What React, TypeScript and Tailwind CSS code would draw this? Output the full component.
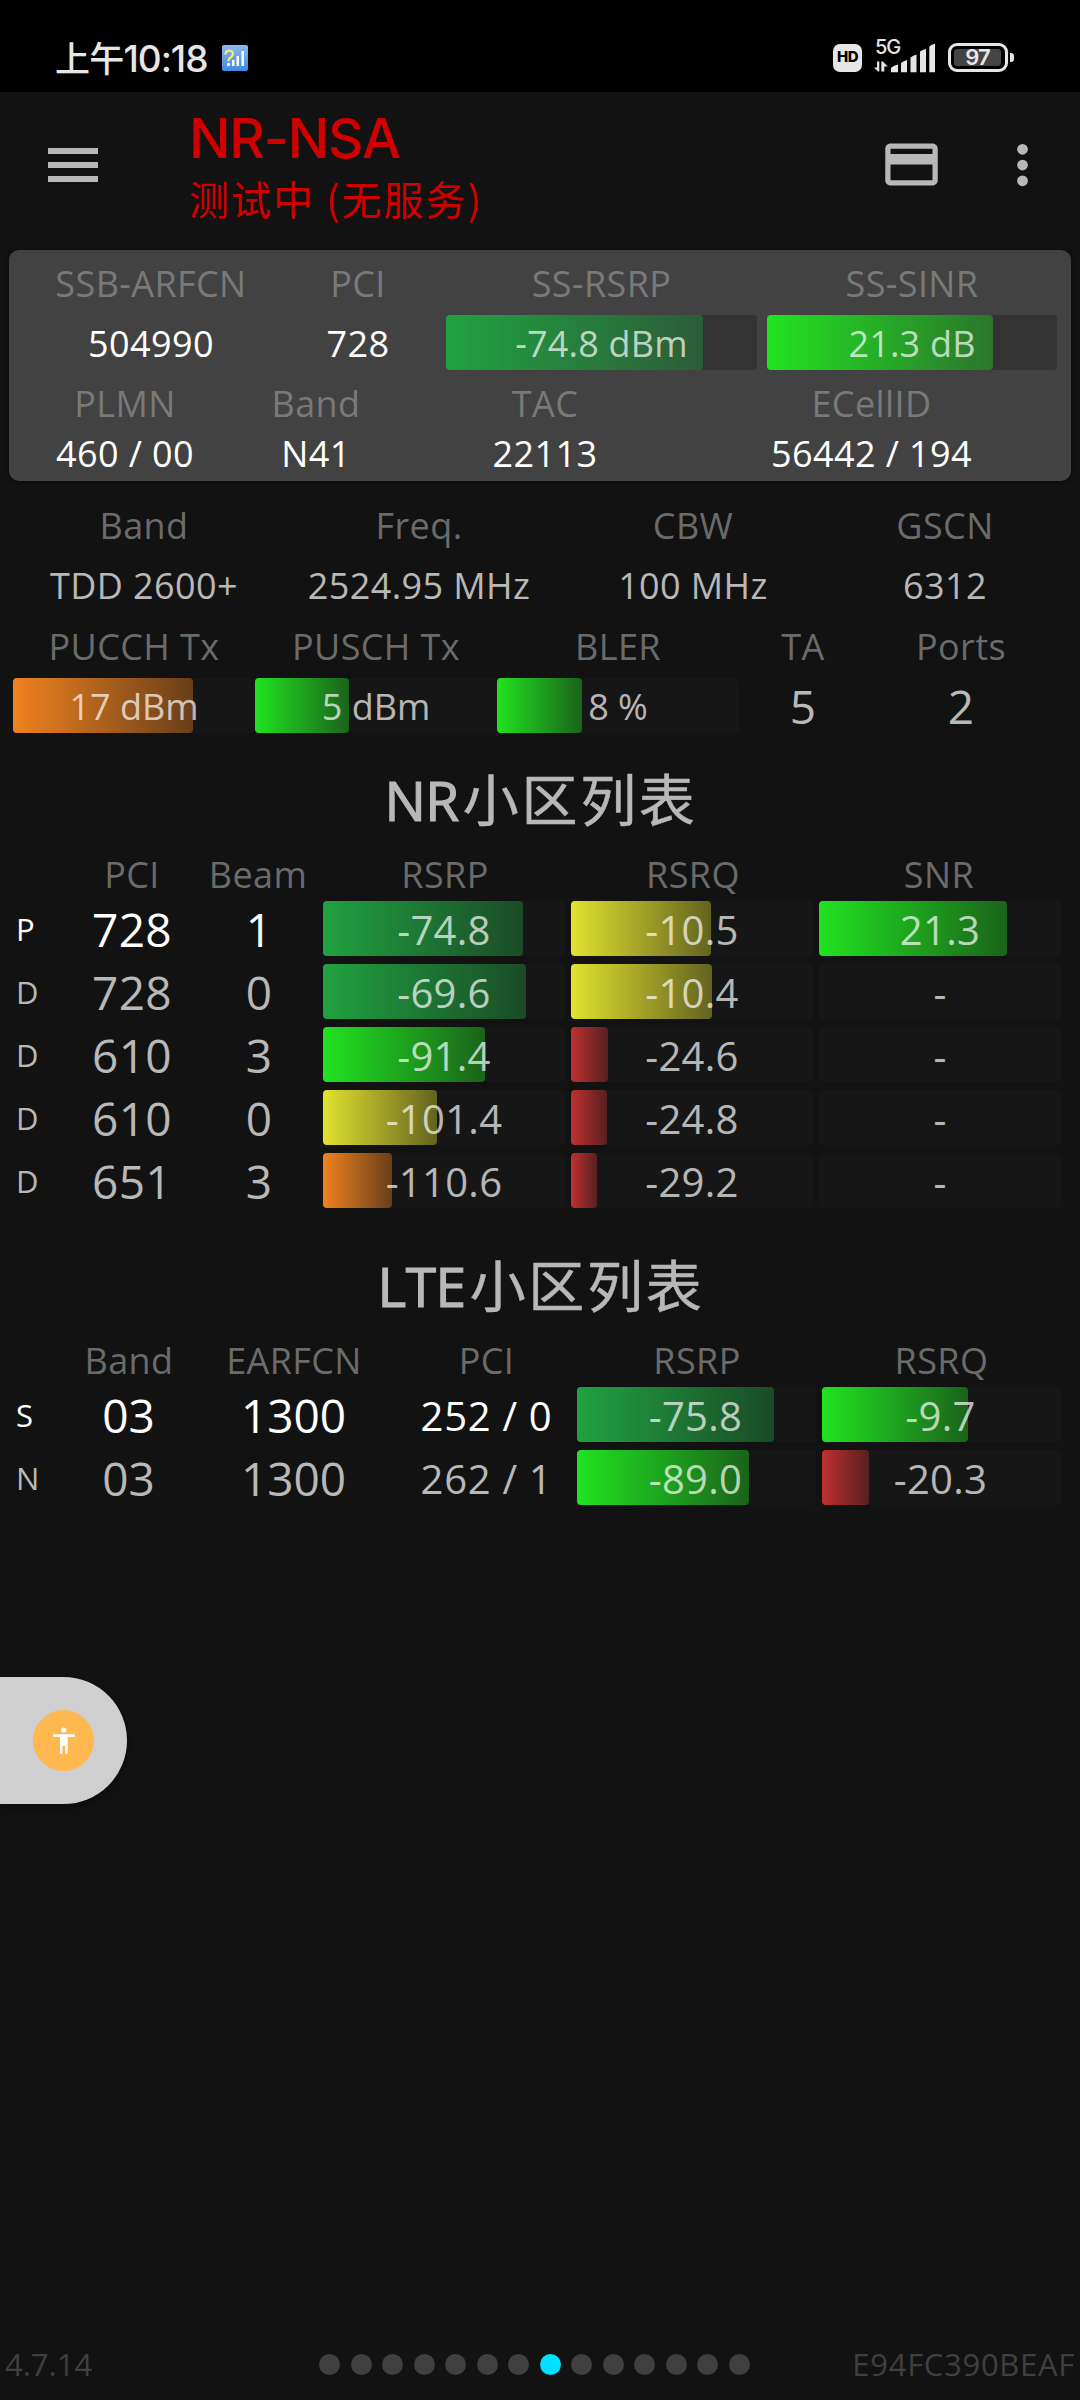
import React from "react";

type Tone = "deep" | "green" | "yellow" | "orange" | "red";

const tones: Record<Tone, string> = {
  deep: "from-[#21a241] to-[#21a24160]",
  green: "from-[#21e321] to-[#21e32160]",
  yellow: "from-[#e2e230] to-[#e2e23060]",
  orange: "from-[#f08220] to-[#f0822060]",
  red: "from-[#c03030] to-[#c0303060]",
};

type BarData = { text: string; tone?: Tone; fill?: number };

function Bar({ text, tone, fill = 0, track = "bg-[#161616]", size = "text-[40px] tracking-[0.3px]" }: BarData & { track?: string; size?: string }) {
  return (
    <div className={`grid h-[55px] min-w-0 rounded ${track}`}>
      {tone && (
        <div
          className={`col-start-1 row-start-1 h-full rounded bg-linear-to-r/srgb ${tones[tone]}`}
          style={{ width: fill }}
        />
      )}
      <div className={`z-10 col-start-1 row-start-1 h-[55px] text-center leading-[57px] text-white/70 ${size}`}>{text}</div>
    </div>
  );
}

function Labels({ cols, items, className = "", color = "text-[#6b6b6b]" }: { cols: string; items: string[]; className?: string; color?: string }) {
  return (
    <div className={`grid h-[50px] text-center text-[36px] leading-[52px] tracking-[0.4px] ${cols} ${className} ${color}`}>
      {items.map((t, i) => (
        <div key={i} className="h-[50px] whitespace-nowrap">{t}</div>
      ))}
    </div>
  );
}

function Title({ latin, rest }: { latin: string; rest: string }) {
  return (
    <h2 className="flex h-[80px] items-baseline justify-center whitespace-nowrap pl-[2px] leading-[80px] text-[#b8b8b8]">
      <span className="text-[55px] tracking-[-0.5px] [-webkit-text-stroke:1.2px_#b8b8b8]">{latin}</span>
      <span className="ml-[4px] font-['Noto_Sans_CJK_SC',sans-serif] text-[56px] font-normal tracking-[2.7px] [-webkit-text-stroke:0.5px_#b8b8b8]">{rest}</span>
    </h2>
  );
}

function StatusBar() {
  return (
    <div className="flex h-[92px] items-start bg-black pl-[55px] text-[#e6e6e6]">
      <div className="flex h-[34px] items-baseline pt-[31px] font-medium leading-[52px] whitespace-nowrap">
        <span className="font-['Noto_Sans_CJK_SC',sans-serif] text-[35px] tracking-[-0.8px]">上午</span>
        <span className="font-[Inter,sans-serif] text-[37px] tracking-[-1px]">10:18</span>
      </div>
      <svg className="mt-[45px] ml-[14px]" width="26" height="26" viewBox="0 0 26 26">
        <defs>
          <linearGradient id="appBlue" x1="0" y1="0" x2="0" y2="1">
            <stop offset="0" stopColor="#8db8f0" />
            <stop offset="1" stopColor="#3f8be4" />
          </linearGradient>
        </defs>
        <rect width="26" height="26" rx="2" fill="url(#appBlue)" />
        <path d="M3.500 9.500C3.500 4.500 11 4.500 11 9C11 12 6.500 12.500 6.500 16" fill="none" stroke="#f4ee78" strokeWidth="2.200" />
        <circle cx="6.500" cy="19.500" r="1.700" fill="#fff" />
        <path d="M10 15h2.500v6H10zM14.500 11H17v10h-2.500zM19.500 6H22v15h-2.500z" fill="#fff" />
      </svg>
      <div className="ml-auto flex pt-[40px] pr-[66px]">
        <div className="mt-[3.5px] flex h-[28px] w-[29px] items-center justify-center rounded-[7px] bg-[#e6e6e6] font-[Inter,sans-serif] text-[15px] font-extrabold tracking-[-0.5px] text-black">
          HD
        </div>
        <div className="ml-[11px] w-[62px]">
          <div className="h-[16px] pl-[2px] font-[Inter,sans-serif] text-[20px] font-medium leading-[15px] tracking-[-1px]">5G</div>
          <svg className="-mt-[13px]" width="62" height="30" viewBox="0 3 62 30">
            <g fill="#e6e6e6">
              <path d="M1 27.500H4V21.500H6.300V31.500H5zM8.300 31.500V21.500H9.800L14.800 26.500H11.300V31.500z" />
              <path d="M18 28Q20 25.500 25 24.700V32.200H18zM28 23Q30.500 21 34 20V32.200H28zM37.500 17.500Q40 15.500 43.500 14.500V32.200H37.500zM47 11.500Q49.500 9.900 53 9V32.200H47zM56.300 6.500Q58.500 4.500 62 3.700V32.200H56.300z" />
            </g>
          </svg>
        </div>
        <div className="mt-[3px] ml-[13px] flex items-center self-start">
          <div className="flex h-[29px] w-[60px] rounded-[9px] border-[3px] border-[#e6e6e6] p-[3px]">
            <div className="flex h-full w-[47px] items-center justify-center rounded-[3px] bg-[#444] font-[Inter,sans-serif] text-[22px] font-semibold tracking-[-1px]">
              97
            </div>
          </div>
          <div className="ml-[2px] h-[9px] w-[4px] rounded-r-[3px] bg-[#e6e6e6]" />
        </div>
      </div>
    </div>
  );
}

function AppBar() {
  return (
    <header className="flex h-[150px] items-start">
      <button className="mt-[56px] ml-[48px] flex w-[50px] flex-col gap-[8.500px]" aria-label="menu">
        <span className="h-[5.500px] w-full bg-[#b8b8b8]" />
        <span className="h-[5.500px] w-full bg-[#b8b8b8]" />
        <span className="h-[5.500px] w-full bg-[#b8b8b8]" />
      </button>
      <div className="ml-[90px] flex flex-col whitespace-nowrap pt-[16px] text-[#d00000]">
        <div className="h-[60px] pl-px font-[Inter,sans-serif] text-[55px] font-medium leading-[60px] tracking-[-1.3px]">NR-NSA</div>
        <div className="ml-px h-[60px] font-['Noto_Sans_CJK_SC',sans-serif] text-[40px] leading-[60px] tracking-[2px]">测试中 (无服务)</div>
      </div>
      <div className="ml-auto flex pt-[41px] pr-[26px]">
        <svg width="63" height="63" viewBox="0 0 24 24" fill="#b8b8b8">
          <path d="M20 4H4c-1.110 0-1.990.89-1.990 2L2 18c0 1.110.89 2 2 2h16c1.110 0 2-.89 2-2V6c0-1.110-.89-2-2-2zm0 14H4v-6h16v6zm0-10H4V6h16v2z" />
        </svg>
        <svg className="ml-[48px]" width="63" height="63" viewBox="0 0 24 24" fill="#b8b8b8">
          <circle cx="12" cy="6.200" r="2.050" />
          <circle cx="12" cy="12.200" r="2.050" />
          <circle cx="12" cy="18.200" r="2.050" />
        </svg>
      </div>
    </header>
  );
}

function ServingCard() {
  const top = "grid-cols-[248px_166px_321px_300px] pl-[18px]";
  const bottom = "grid-cols-[214px_168px_290px_363px] pl-[9px]";
  const size = "text-[36px] tracking-[0.2px]";
  return (
    <section className="ml-[9px] h-[231px] w-[1062px] rounded-[10px] bg-[#424242] pt-[8px] shadow-[0_1px_4px_rgba(0,0,0,0.4)]">
      <Labels cols={top} items={["SSB-ARFCN", "PCI", "SS-RSRP", "SS-SINR"]} color="text-[#797979]" />
      <div className={`mt-[7px] grid h-[55px] text-center text-[36px] leading-[57px] tracking-[0.4px] text-white ${top}`}>
        <div>504990</div>
        <div>728</div>
        <div className="px-[5px]">
          <Bar text="-74.8 dBm" tone="deep" fill={257} track="bg-[#333]" size={size} />
        </div>
        <div className="px-[5px]">
          <Bar text="21.3 dB" tone="green" fill={226} track="bg-[#333]" size={size} />
        </div>
      </div>
      <Labels cols={bottom} items={["PLMN", "Band", "TAC", "ECellID"]} className="mt-[8px]" color="text-[#797979]" />
      <Labels cols={bottom} items={["460 / 00", "N41", "22113", "56442 / 194"]} color="text-white" />
    </section>
  );
}

function Details() {
  const top = "grid-cols-[274px_276px_272px_232px] pl-[7px]";
  const bottom = "grid-cols-[242px_242px_242px_128px_188px] pl-[13px]";
  const size = "text-[36px] tracking-normal";
  return (
    <section className="pt-[19px]">
      <Labels cols={top} items={["Band", "Freq.", "CBW", "GSCN"]} />
      <Labels cols={top} items={["TDD 2600+", "2524.95 MHz", "100 MHz", "6312"]} className="mt-[10px] tracking-[0.1px]" color="text-[#b8b8b8]" />
      <Labels cols={bottom} items={["PUCCH Tx", "PUSCH Tx", "BLER", "TA", "Ports"]} className="mt-[11px] tracking-[0.1px]" />
      <div className={`mt-[7px] grid h-[55px] text-center text-[46px] leading-[57px] text-[#b8b8b8] ${bottom}`}>
        <Bar text="17 dBm" tone="orange" fill={180} size={size} />
        <Bar text="5 dBm" tone="green" fill={94} size={size} />
        <Bar text="8 %" tone="green" fill={85} size={size} />
        <div>5</div>
        <div>2</div>
      </div>
    </section>
  );
}

type NrRow = { kind: string; pci: string; beam: string; bars: BarData[] };

const nrRows: NrRow[] = [
  { kind: "P", pci: "728", beam: "1", bars: [{ text: "-74.8", tone: "deep", fill: 200 }, { text: "-10.5", tone: "yellow", fill: 140 }, { text: "21.3", tone: "green", fill: 188 }] },
  { kind: "D", pci: "728", beam: "0", bars: [{ text: "-69.6", tone: "deep", fill: 203 }, { text: "-10.4", tone: "yellow", fill: 141 }, { text: "-" }] },
  { kind: "D", pci: "610", beam: "3", bars: [{ text: "-91.4", tone: "green", fill: 162 }, { text: "-24.6", tone: "red", fill: 37 }, { text: "-" }] },
  { kind: "D", pci: "610", beam: "0", bars: [{ text: "-101.4", tone: "yellow", fill: 114 }, { text: "-24.8", tone: "red", fill: 36 }, { text: "-" }] },
  { kind: "D", pci: "651", beam: "3", bars: [{ text: "-110.6", tone: "orange", fill: 69 }, { text: "-29.2", tone: "red", fill: 26 }, { text: "-" }] },
];

function rowTone(i: number) {
  return i === 0 ? "text-white" : "text-[#b8b8b8]";
}

function NrList() {
  return (
    <section className="pt-[24px]">
      <Title latin="NR" rest="小区列表" />
      <Labels cols="grid-cols-[54px_126px_126px_248px_248px_244px] pl-[15px]" className="mt-[12px]" items={["", "PCI", "Beam", "RSRP", "RSRQ", "SNR"]} />
      <div className="mt-[2px] flex flex-col gap-[8px]">
        {nrRows.map((r, i) => (
          <div key={i} className={`flex h-[55px] pl-[16px] text-center text-[46px] leading-[57px] ${rowTone(i)}`}>
            <div className="w-[53px] text-left text-[31px]">{r.kind}</div>
            <div className="w-[126px] tracking-[0.3px]">{r.pci}</div>
            <div className="w-[128px]">{r.beam}</div>
            <div className="grid grid-cols-[242px_242px_242px] gap-[6px]">
              {r.bars.map((b, j) => (
                <Bar key={j} {...b} />
              ))}
            </div>
          </div>
        ))}
      </div>
    </section>
  );
}

type LteRow = { kind: string; band: string; arfcn: string; pci: string; bars: BarData[] };

const lteRows: LteRow[] = [
  { kind: "S", band: "03", arfcn: "1300", pci: "252 / 0", bars: [{ text: "-75.8", tone: "deep", fill: 197 }, { text: "-9.7", tone: "green", fill: 146 }] },
  { kind: "N", band: "03", arfcn: "1300", pci: "262 / 1", bars: [{ text: "-89.0", tone: "green", fill: 172 }, { text: "-20.3", tone: "red", fill: 47 }] },
];

function LteList() {
  return (
    <section className="pt-[35px]">
      <Title latin="LTE" rest="小区列表" />
      <Labels cols="grid-cols-[45px_138px_192px_193px_228px_261px] pl-[15px]" className="mt-[12px]" items={["", "Band", "EARFCN", "PCI", "RSRP", "RSRQ"]} />
      <div className="mt-[2px] flex flex-col gap-[8px]">
        {lteRows.map((r, i) => (
          <div key={i} className={`flex h-[55px] pl-[16px] text-center text-[46px] leading-[57px] ${rowTone(i)}`}>
            <div className="w-[44px] text-left text-[31px]">{r.kind}</div>
            <div className="w-[137px]">{r.band}</div>
            <div className="w-[193px]">{r.arfcn}</div>
            <div className="w-[187px] pl-[6px] text-[40px] tracking-[0.7px] whitespace-nowrap">{r.pci}</div>
            <div className="grid grid-cols-[239px_239px] gap-[6px]">
              {r.bars.map((b, j) => (
                <Bar key={j} {...b} size="text-[40px] tracking-[0.3px] pr-[2px]" />
              ))}
            </div>
          </div>
        ))}
      </div>
    </section>
  );
}

function Footer() {
  return (
    <footer className="mt-auto flex h-[71px] items-center pr-[5px] pl-[5px] text-[31px] text-[#404040]">
      <span className="w-[314px]">4.7.14</span>
      <div className="flex gap-[10.500px]">
        {Array.from({ length: 14 }, (_, i) => (
          <span key={i} className={`h-[21px] w-[21px] rounded-full ${i === 7 ? "bg-[#00e0ff]" : "bg-[#404040]"}`} />
        ))}
      </div>
      <span className="ml-auto tracking-[0.7px] whitespace-nowrap">E94FC390BEAF</span>
    </footer>
  );
}

function AccessibilityHandle() {
  return (
    <div className="absolute top-[1677px] left-0 flex h-[127px] w-[127px] items-center rounded-r-full bg-[#cfcfcf] pl-[33px] shadow-[0_4px_10px_rgba(0,0,0,0.35)]">
      <svg width="61" height="61" viewBox="0 0 61 61">
        <circle cx="30.500" cy="30.500" r="30.500" fill="#ffb74f" />
        <g fill="#fff">
          <circle cx="30.700" cy="20" r="2.600" />
          <rect x="20" y="24.300" width="22" height="2.600" rx="1.200" />
          <path d="M27 25h7.700v18a1.200 1.200 0 0 1-2.500 0v-7h-2.700v7a1.200 1.200 0 0 1-2.500 0z" />
        </g>
      </svg>
    </div>
  );
}

export default function App() {
  return (
    <div className="relative flex h-[2400px] w-[1080px] flex-col overflow-hidden bg-[#121212] font-['Open_Sans','Noto_Sans_CJK_SC',sans-serif]">
      <StatusBar />
      <AppBar />
      <main className="mt-[8px]">
        <ServingCard />
        <Details />
        <NrList />
        <LteList />
      </main>
      <Footer />
      <AccessibilityHandle />
    </div>
  );
}
